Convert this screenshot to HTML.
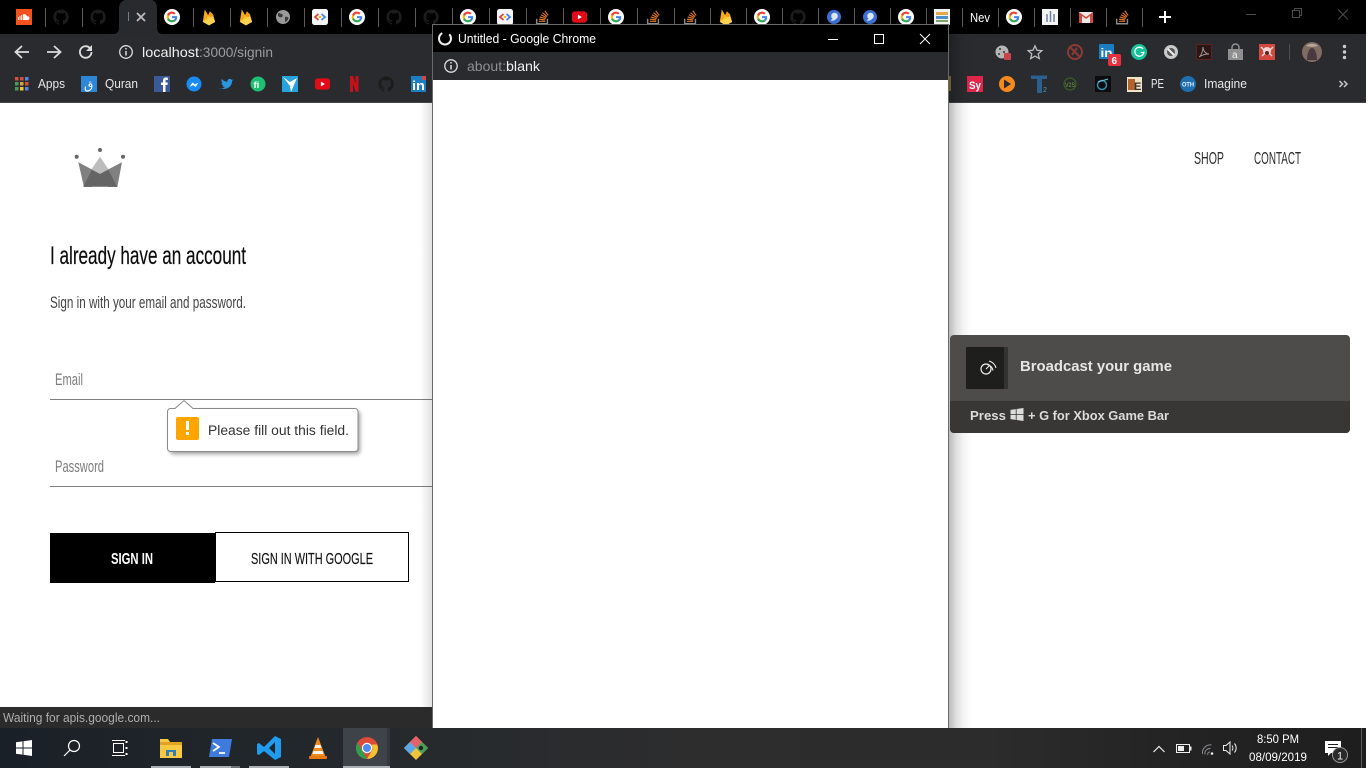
<!DOCTYPE html>
<html lang="en">
<head>
<meta charset="utf-8">
<title>Sign in</title>
<style>
html,body{margin:0;padding:0;background:#fff;width:1372px;height:768px;overflow:hidden}
svg{display:block}
text{font-family:"Liberation Sans",sans-serif;white-space:pre}
</style>
</head>
<body>
<svg width="1372" height="768" viewBox="0 0 1372 768" xmlns="http://www.w3.org/2000/svg">
<defs>
  <linearGradient id="shR" x1="0" x2="1" y1="0" y2="0">
    <stop offset="0" stop-color="#000" stop-opacity=".27"/>
    <stop offset=".3" stop-color="#000" stop-opacity=".13"/>
    <stop offset=".65" stop-color="#000" stop-opacity=".04"/>
    <stop offset="1" stop-color="#000" stop-opacity="0"/>
  </linearGradient>
  <linearGradient id="shL" x1="0" x2="1" y1="0" y2="0">
    <stop offset="0" stop-color="#000" stop-opacity="0"/>
    <stop offset="1" stop-color="#000" stop-opacity=".12"/>
  </linearGradient>
  <linearGradient id="tb" x1="0" x2="1" y1="0" y2="0">
    <stop offset="0" stop-color="#1a2027"/>
    <stop offset=".31" stop-color="#262a2d"/>
    <stop offset=".5" stop-color="#2d2d2e"/>
    <stop offset=".72" stop-color="#2c2c2c"/>
    <stop offset=".85" stop-color="#242424"/>
    <stop offset="1" stop-color="#1e1e1e"/>
  </linearGradient>
  <filter id="bub" x="-10%" y="-20%" width="125%" height="150%">
    <feGaussianBlur stdDeviation="2"/>
  </filter>
  <symbol id="g" viewBox="0 0 24 24" overflow="visible">
    <circle cx="12" cy="12" r="12" fill="#fff"/>
    <path d="M19.800 12.200c0-.6-.05-1.100-.15-1.600H12v3h4.400c-.2 1-.8 1.900-1.700 2.500v2h2.700c1.600-1.400 2.400-3.500 2.400-5.900z" fill="#4285f4"/>
    <path d="M12 20c2.200 0 4-.7 5.400-2l-2.700-2c-.7.5-1.600.8-2.700.8-2.100 0-3.900-1.400-4.500-3.300H4.700v2.100C6.100 18.300 8.800 20 12 20z" fill="#34a853"/>
    <path d="M7.500 13.500c-.3-1-.3-2 0-3V8.400H4.700c-.9 1.900-.9 5.300 0 7.200z" fill="#fbbc05"/>
    <path d="M12 7.200c1.200 0 2.200.4 3 1.200l2.300-2.300C15.900 4.800 14.100 4 12 4 8.800 4 6.100 5.700 4.700 8.400l2.800 2.100c.6-1.900 2.400-3.300 4.500-3.300z" fill="#ea4335"/>
  </symbol>
  <symbol id="gh" viewBox="0 0 16 16" overflow="visible">
    <path d="M8 .5a7.700 7.700 0 0 0-2.400 15c.4.1.5-.2.500-.4v-1.300c-2.100.5-2.600-1-2.600-1-.3-.9-.8-1.100-.8-1.100-.7-.5.100-.5.100-.5.800.1 1.200.8 1.200.8.700 1.200 1.800.8 2.200.6.100-.5.300-.8.500-1-1.700-.2-3.500-.9-3.500-3.800 0-.8.300-1.500.8-2-.1-.2-.3-1 .1-2 0 0 .6-.2 2.100.8a7.300 7.300 0 0 1 3.800 0c1.500-1 2.100-.8 2.100-.8.400 1 .2 1.800.1 2 .5.500.8 1.200.8 2 0 2.900-1.800 3.600-3.500 3.800.3.200.5.700.5 1.400v2.100c0 .2.100.5.500.4A7.700 7.700 0 0 0 8 .5z" fill="#1c1c1c"/>
  </symbol>
  <symbol id="fb" viewBox="0 0 16 20" overflow="visible">
    <path d="M1 15.500 3.200 1.500 7 8 9 3.500 12.500 7 15 15.500 8 19.500z" fill="#fbc02d"/>
    <path d="M3.200 1.500 7 8 5 12 1 15.500z" fill="#f6a81c"/>
    <path d="M9 3.500 12.500 7 15 15.500 7 8z" fill="#f59a1b"/>
    <path d="M1 15.500 12 9 15 15.500 8 19.500z" fill="#fdd24e"/>
  </symbol>
  <symbol id="so" viewBox="0 0 16 20" overflow="visible">
    <path d="M1.500 12v5.500h12V12" fill="none" stroke="#8a8a8a" stroke-width="1.600"/>
    <path d="M4 14.800h7M4.200 12.500l6.800.7M4.900 10l6.600 1.700M6.200 7.500l6 3M8 5.200l5.200 4.300M10.500 3l3.800 5.300" fill="none" stroke="#d9722a" stroke-width="1.300"/>
  </symbol>
  <symbol id="code" viewBox="0 0 16 16" overflow="visible">
    <rect width="16" height="16" rx="2.500" fill="#f5f5f5"/>
    <path d="M6.500 5 3 8l3.500 3" fill="none" stroke="#db4437" stroke-width="1.800"/>
    <path d="M9.500 5 13 8l-3.500 3" fill="none" stroke="#4285f4" stroke-width="1.800"/>
    <path d="M6.800 8h2.400" stroke="#f4b400" stroke-width="1.800"/>
  </symbol>
  <symbol id="yt" viewBox="0 0 16 12" overflow="visible">
    <rect width="16" height="12" rx="3" fill="#e30b17"/>
    <path d="M6.300 3.500v5L10.500 6z" fill="#fff"/>
  </symbol>
  <symbol id="blue" viewBox="0 0 14 14" overflow="visible">
    <circle cx="7" cy="7" r="7" fill="#3b6fd1"/>
    <circle cx="7.500" cy="6" r="3.300" fill="#dbe6fb"/>
    <path d="M3.500 10.500c1.500.5 4 .2 5.500-1.500l-3-.5z" fill="#dbe6fb"/>
  </symbol>
  <symbol id="win" viewBox="0 0 16 16" overflow="visible">
    <path d="M0 2.300 6.500 1.400V7.500H0zM7.500 1.200 16 0V7.500H7.500zM0 8.500H6.500V14.600L0 13.700zM7.500 8.500H16V16L7.500 14.800z" fill="currentColor"/>
  </symbol>
</defs>

<rect width="1372" height="768" fill="#fff"/>

<!-- Tab strip -->
<rect x="0" y="0" width="1366" height="34" fill="#000"/>
<path d="M113 34c4 0 6-2 6-7V8c0-4 3-8 7-8h25c4 0 6 4 6 8v19c0 5 2 7 6 7z" fill="#292a2d"/>
<g stroke="#5a5a5a" stroke-width="1">
  <path d="M45.500 8v19M82.500 8v19M193.500 8v19M230.500 8v19M267.500 8v19M304.500 8v19M341.500 8v19M378.500 8v19M415.500 8v19M452.500 8v19M489.500 8v19M526.500 8v16M563.500 8v16M600.500 8v16M637.500 8v16M674.500 8v16M710.500 8v16M746.500 8v16M782.500 8v16M818.500 8v16M854.500 8v16M890.500 8v16M926.500 8v16M962.500 8v19M998.500 8v19M1034.500 8v19M1070.500 8v19M1106.500 8v19M1142.500 8v19"/>
</g>
<!-- soundcloud -->
<rect x="16" y="9" width="16" height="16" fill="#f4511e"/>
<path d="M18 20v-3h.8v3zM19.600 20v-4h.8v4zM21.200 20v-5h.8v5zM22.800 20v-5.500c1.800-.9 3.700 0 4 1.800 1.500-.3 2.700.4 2.700 1.900 0 1.100-.8 1.800-1.900 1.800z" fill="#fff"/>
<use href="#gh" x="53" y="9" width="16" height="16"/>
<use href="#gh" x="90" y="9" width="16" height="16"/>
<path d="M128.500 12v9" stroke="#7c7c90" stroke-width="1"/>
<path d="M137 13l8 8M145 13l-8 8" stroke="#bdbdbd" stroke-width="1.800"/>
<use href="#g" x="164" y="9" width="16" height="16"/>
<use href="#fb" x="202" y="8" width="14" height="18"/>
<use href="#fb" x="239" y="8" width="14" height="18"/>
<circle cx="283" cy="17" r="7" fill="#9a9a9a"/>
<path d="M278 13c2 0 3 1 4 1s1 2 0 3-3 0-4-1zM285 17c2-.5 3 0 3.500 1-.5 2-2 3.500-3.500 4z" fill="#3a3a3a"/>
<use href="#code" x="312" y="9" width="16" height="16"/>
<use href="#g" x="349" y="9" width="16" height="16"/>
<use href="#gh" x="386" y="9" width="16" height="16"/>
<use href="#gh" x="423" y="9" width="16" height="16"/>
<use href="#g" x="460" y="9" width="16" height="16"/>
<use href="#code" x="497" y="9" width="16" height="16"/>
<use href="#so" x="535" y="8" width="15" height="18"/>
<use href="#yt" x="572" y="11" width="15" height="12"/>
<use href="#g" x="608" y="9" width="16" height="16"/>
<use href="#so" x="646" y="8" width="15" height="18"/>
<use href="#so" x="683" y="8" width="15" height="18"/>
<use href="#fb" x="719" y="8" width="14" height="18"/>
<use href="#g" x="754" y="9" width="16" height="16"/>
<use href="#gh" x="790" y="9" width="16" height="16"/>
<use href="#blue" x="827" y="10" width="14" height="14"/>
<use href="#blue" x="863" y="10" width="14" height="14"/>
<use href="#g" x="898" y="9" width="16" height="16"/>
<rect x="934" y="9" width="16" height="16" fill="#f2f2ee"/>
<rect x="936" y="12" width="12" height="3" fill="#e0a850"/>
<rect x="936" y="16" width="12" height="3" fill="#4b8fc4"/>
<rect x="936" y="20" width="12" height="2" fill="#7aa66a"/>
<text x="970" y="22" font-size="13" fill="#fff" textLength="20" lengthAdjust="spacingAndGlyphs">Nev</text>
<use href="#g" x="1006" y="9" width="16" height="16"/>
<rect x="1042" y="9" width="16" height="16" fill="#f5f5f5"/>
<path d="M1047 14v8M1050.500 11v11M1054 14v8" stroke="#6e7fa8" stroke-width="1.500"/>
<rect x="1079" y="12" width="14" height="11" fill="#f1e9e7"/>
<path d="M1079 12v11h3v-7l4 3 4-3v7h3V12l-7 5z" fill="#d14b3d"/>
<use href="#so" x="1115" y="8" width="15" height="18"/>
<path d="M1159 17h12M1165 11v12" stroke="#fff" stroke-width="2"/>
<!-- window controls -->
<path d="M1246 14.500h10" stroke="#4c4c4c" stroke-width="1"/>
<path d="M1292.500 10.500h7v7h-7zM1294.500 10.500v-2h7v7h-2" fill="none" stroke="#4c4c4c"/>
<path d="M1338 9.500l10 10M1348 9.500l-10 10" stroke="#4c4c4c"/>

<!-- Toolbar and bookmarks -->
<rect x="0" y="34" width="1366" height="68" fill="#2a2b2e"/>
<rect x="0" y="102" width="1366" height="1" fill="#444"/>
<path d="M29 52H16M22 46l-6.500 6 6.500 6" fill="none" stroke="#dcdcdc" stroke-width="1.800"/>
<path d="M47 52h13M54 46l6.500 6-6.500 6" fill="none" stroke="#dcdcdc" stroke-width="1.800"/>
<path d="M91.500 52a5.800 5.800 0 1 1-1.700-4.100" fill="none" stroke="#dcdcdc" stroke-width="1.800"/>
<path d="M92 45v6h-6z" fill="#dcdcdc"/>
<circle cx="126" cy="52" r="6.300" fill="none" stroke="#dcdcdc" stroke-width="1.300"/>
<path d="M126 51v4.500M126 48v1.500" stroke="#dcdcdc" stroke-width="1.500"/>
<text x="142" y="57" font-size="14" fill="#f0f0f0" textLength="57" lengthAdjust="spacingAndGlyphs">localhost</text>
<text x="199" y="57" font-size="14" fill="#9b9c9e" textLength="74" lengthAdjust="spacingAndGlyphs">:3000/signin</text>

<!-- right toolbar icons -->
<circle cx="1002" cy="52" r="6.500" fill="#b5b5b5"/>
<circle cx="1000" cy="49" r="1" fill="#333"/><circle cx="999" cy="54" r="1" fill="#333"/><circle cx="1004" cy="52" r="1" fill="#333"/>
<rect x="1004" y="53" width="7" height="7" rx="1" fill="#c9444a"/>
<path d="M1035 45.800l2 4.500 4.800.4-3.600 3.200 1.100 4.700-4.300-2.500-4.300 2.500 1.100-4.700-3.600-3.200 4.800-.4z" fill="none" stroke="#bdbdbd" stroke-width="1.300"/>
<circle cx="1075" cy="52" r="7" fill="none" stroke="#8c3a34" stroke-width="2"/>
<path d="M1070 47l10 10M1072 55l5-7" stroke="#8c3a34" stroke-width="2"/>
<rect x="1099" y="44" width="15" height="15" rx="1" fill="#1c7ec2"/>
<text x="1100.500" y="57" font-size="12" font-weight="700" fill="#fff" textLength="12" lengthAdjust="spacingAndGlyphs">in</text>
<rect x="1108" y="54" width="13" height="12" rx="2" fill="#e8303f"/>
<text x="1111.500" y="64" font-size="10" font-weight="700" fill="#fff">6</text>
<circle cx="1139" cy="52" r="8" fill="#15c39a"/>
<path d="M1143 49a4.500 4.500 0 1 0 .8 3.500h-3" fill="none" stroke="#fff" stroke-width="1.300"/>
<circle cx="1171" cy="52" r="7" fill="#c9c9c9"/>
<circle cx="1171" cy="52" r="4" fill="#555"/>
<path d="M1168 49l6 6" stroke="#eee" stroke-width="2"/>
<rect x="1196.500" y="44.500" width="15" height="15" fill="#2a1614" stroke="#5a2420"/>
<path d="M1199 57c2-1 4-6 4-10 0 4 3 7 6 7-3 0-7 1-10 3z" fill="none" stroke="#a39693"/>
<path d="M1228 49h15v11h-15z" fill="#8f8f8f"/>
<path d="M1232 49v-1.500a3.500 3.500 0 0 1 7 0V49" fill="none" stroke="#8f8f8f" stroke-width="1.500"/>
<text x="1232" y="58" font-size="10" fill="#eee">a</text>
<rect x="1259" y="44" width="16" height="16" fill="#d2493f"/>
<circle cx="1267" cy="51" r="4" fill="#f3d6d3"/>
<path d="M1261 47l3 3M1273 47l-3 3M1262 56l3-3M1272 56l-3-3" stroke="#f3d6d3" stroke-width="1.500"/>
<circle cx="1267" cy="53" r="2" fill="#5a2320"/>
<path d="M1289.500 44v16" stroke="#4c4d50"/>
<circle cx="1312" cy="52" r="10" fill="#7f6c62"/>
<path d="M1307 60c0-6 2-12 5-12s5 6 5 12z" fill="#4a3940"/>
<path d="M1306 46c3-3 9-3 12 0-3 1-9 1-12 0z" fill="#b5a89a"/>
<circle cx="1344.500" cy="46.500" r="1.700" fill="#ccc"/><circle cx="1344.500" cy="52" r="1.700" fill="#ccc"/><circle cx="1344.500" cy="57.500" r="1.700" fill="#ccc"/>

<!-- bookmarks -->
<g>
  <rect x="15" y="77" width="3.500" height="3.500" fill="#d5503c"/><rect x="20" y="77" width="3.500" height="3.500" fill="#d5503c"/><rect x="25" y="77" width="3.500" height="3.500" fill="#4c88e8"/>
  <rect x="15" y="82" width="3.500" height="3.500" fill="#4c9a5a"/><rect x="20" y="82" width="3.500" height="3.500" fill="#d5a53c"/><rect x="25" y="82" width="3.500" height="3.500" fill="#d5503c"/>
  <rect x="15" y="87" width="3.500" height="3.500" fill="#4c9a5a"/><rect x="20" y="87" width="3.500" height="3.500" fill="#f4c430"/><rect x="25" y="87" width="3.500" height="3.500" fill="#4c88e8"/>
</g>
<text x="38" y="88" font-size="12.500" fill="#e8e8e8" textLength="27" lengthAdjust="spacingAndGlyphs">Apps</text>
<rect x="81" y="76" width="16" height="16" fill="#2d86d6"/>
<text x="84" y="89" font-size="12" fill="#fff" font-family="'DejaVu Sans',sans-serif">ق</text>
<text x="105" y="88" font-size="12.500" fill="#e8e8e8" textLength="33" lengthAdjust="spacingAndGlyphs">Quran</text>
<rect x="154" y="76" width="16" height="16" fill="#3b5998"/>
<path d="M163 92v-7h-2v-2.500h2V80.500c0-2 1.200-3 3-3h1.800V80h-1.300c-.8 0-1 .4-1 1v1.500h2.300l-.4 2.500h-1.900v7z" fill="#fff"/>
<circle cx="194" cy="84" r="7.500" fill="#1a8af5"/>
<path d="M189.500 87l3-4.500 2.500 2 3.500-2-3 4.500-2.500-2z" fill="#fff"/>
<path d="M219 88c4 2 10 1 12-3 1-2 1-3 1-4l1.500-1.500-1.700.4c-1-1.700-4.300-1.500-4.600 1.800-2 0-4-1-5.500-2.700-.6 1.500-.3 3 1 4l-1.300-.3c0 1.500 1 2.500 2.500 3h-1.400c.4 1 1.300 1.600 2.500 1.700-1.600 1-3.500 1.300-6 1.100z" fill="#2a96e0"/>
<circle cx="258" cy="84" r="7.500" fill="#1dbf73"/>
<text x="253.500" y="88" font-size="9.500" font-weight="700" fill="#fff" font-family="'Liberation Serif',serif">fi</text>
<rect x="282" y="76" width="16" height="16" fill="#26a3dc"/>
<path d="M283 77l7 5 7-4-3 7-3 7-1-6z" fill="#fff"/>
<use href="#yt" x="315" y="78" width="15" height="12"/>
<path d="M350 76h3l2.500 8V76h3v16l-3-.5-2.500-8V92l-3 .3z" fill="#c4111a"/>
<use href="#gh" x="378" y="76" width="16" height="16"/>
<rect x="411" y="76" width="15" height="16" fill="#1c7ec2"/>
<text x="412" y="90" font-size="13" font-weight="700" fill="#fff" textLength="13" lengthAdjust="spacingAndGlyphs">in</text>
<rect x="422" y="76" width="4" height="4" fill="#d04848"/>

<rect x="948" y="76" width="3" height="15" fill="#8f7a3a"/>
<rect x="967" y="76" width="16" height="16" fill="#e0244a"/>
<text x="969" y="89" font-size="11" font-weight="700" fill="#fff" textLength="12" lengthAdjust="spacingAndGlyphs">Sy</text>
<circle cx="1007" cy="84" r="8" fill="#f58a1f"/>
<path d="M1004 79.500v9l7-4.500z" fill="#2a2b2e"/>
<path d="M1031 75.500h16v3.500h-5V93h-5V79h-6z" fill="#2a6090"/>
<text x="1043" y="92" font-size="7" fill="#5f95c0">2</text>
<circle cx="1070" cy="84" r="6" fill="none" stroke="#3f6a1f" stroke-width="1"/>
<text x="1065" y="87" font-size="6.500" fill="#6ea53a" textLength="10" lengthAdjust="spacingAndGlyphs">V2S</text>
<rect x="1095" y="76" width="16" height="16" fill="#0c0c0c"/>
<circle cx="1102" cy="85" r="4.500" fill="none" stroke="#2d8fb5" stroke-width="1.500"/>
<path d="M1098 82l10-3" stroke="#6fc2dd"/>
<rect x="1127" y="77" width="15" height="15" fill="#f1e3c8"/>
<rect x="1128" y="79" width="7" height="11" fill="#b5622c"/>
<text x="1134" y="90" font-size="11" font-weight="700" fill="#333">E</text>
<text x="1151" y="88" font-size="12.500" fill="#e8e8e8" textLength="13" lengthAdjust="spacingAndGlyphs">PE</text>
<circle cx="1188" cy="84" r="8" fill="#1f6fb0"/>
<text x="1182" y="86.500" font-size="6" font-weight="700" fill="#e8f2fa" textLength="12" lengthAdjust="spacingAndGlyphs">OTH</text>
<text x="1204" y="88" font-size="12.500" fill="#e8e8e8" textLength="43" lengthAdjust="spacingAndGlyphs">Imagine</text>
<path d="M1339.500 81l3 3-3 3M1344 81l3 3-3 3" fill="none" stroke="#c8c8c8" stroke-width="1.500"/>

<!-- Page -->
<circle cx="76.700" cy="156.700" r="2" fill="#666"/>
<circle cx="100" cy="150" r="2" fill="#666"/>
<circle cx="123" cy="156.700" r="2" fill="#666"/>
<path d="M100 156.700 90 171.500 100 175 110 171.500z" fill="#bcbcbc"/>
<path d="M78.300 162.300 92 169.500 100 174 92 187H84z" fill="#808080"/>
<path d="M122 162.300 108 169.500 100 174 108 187H117.300z" fill="#808080"/>
<path d="M100 174 91.700 170 83.300 186.700H117.300L108.300 170z" fill="#646464"/>
<text x="50" y="264" font-size="25" fill="#0c0c0c" stroke="#0c0c0c" stroke-width=".2" textLength="196" lengthAdjust="spacingAndGlyphs">I already have an account</text>
<text x="50" y="308" font-size="17" fill="#444" textLength="196" lengthAdjust="spacingAndGlyphs">Sign in with your email and password.</text>
<text x="55" y="385" font-size="17" fill="#7d7d7d" textLength="28" lengthAdjust="spacingAndGlyphs">Email</text>
<rect x="50" y="399" width="383" height="1" fill="#7f7f7f"/>
<text x="55" y="472" font-size="17" fill="#7d7d7d" textLength="49" lengthAdjust="spacingAndGlyphs">Password</text>
<rect x="50" y="486" width="383" height="1" fill="#7f7f7f"/>
<rect x="50" y="533" width="165" height="50" fill="#000"/>
<text x="111" y="564" font-size="16" font-weight="700" fill="#fff" textLength="42" lengthAdjust="spacingAndGlyphs">SIGN IN</text>
<rect x="215.500" y="532.500" width="193" height="49" fill="#fff" stroke="#000"/>
<text x="251" y="564" font-size="16" fill="#111" stroke="#111" stroke-width=".15" textLength="122" lengthAdjust="spacingAndGlyphs">SIGN IN WITH GOOGLE</text>
<text x="1194" y="164" font-size="17.500" fill="#2c2c2c" textLength="30" lengthAdjust="spacingAndGlyphs">SHOP</text>
<text x="1254" y="164" font-size="17.500" fill="#2c2c2c" textLength="47" lengthAdjust="spacingAndGlyphs">CONTACT</text>

<!-- Validation bubble -->
<rect x="170" y="411" width="190" height="43" rx="3" fill="#000" opacity=".4" filter="url(#bub)"/>
<path d="M170.500 408.500H175L184 400.500 193 408.500H355a3 3 0 0 1 3 3v37a3 3 0 0 1-3 3H170.500a3 3 0 0 1-3-3v-37a3 3 0 0 1 3-3z" fill="#fff" stroke="#8a8a8a"/>
<rect x="176" y="417" width="23" height="23" rx="2" fill="#ffa500"/>
<rect x="186" y="421" width="3" height="9" fill="#fff"/>
<rect x="186" y="432" width="3" height="3" fill="#fff"/>
<text x="208" y="435" font-size="13.500" fill="#333" textLength="141" lengthAdjust="spacingAndGlyphs">Please fill out this field.</text>

<!-- Status bar -->
<rect x="0" y="707" width="433" height="21" fill="#2b2b2b"/>
<text x="3" y="722" font-size="12.500" fill="#aeaeae" textLength="157" lengthAdjust="spacingAndGlyphs">Waiting for apis.google.com...</text>

<!-- Popup window shadow -->
<rect x="949" y="24" width="23" height="704" fill="url(#shR)"/>
<rect x="420" y="103" width="13" height="604" fill="url(#shL)"/>

<!-- Popup window -->
<rect x="432" y="24" width="517" height="704" fill="#6a6a6a"/>
<rect x="433" y="25" width="515" height="27" fill="#000"/>
<rect x="433" y="52" width="515" height="28" fill="#292b2e"/>
<rect x="433" y="80" width="515" height="648" fill="#fff"/>
<circle cx="445" cy="38.500" r="6" fill="none" stroke="#eee" stroke-width="2" stroke-dasharray="30 7.700" transform="rotate(-45 445 38.500)"/>
<text x="458" y="43" font-size="12.500" fill="#fff" textLength="138" lengthAdjust="spacingAndGlyphs">Untitled - Google Chrome</text>
<path d="M828 39.500h10" stroke="#fff"/>
<rect x="874.500" y="34.500" width="9" height="9" fill="none" stroke="#fff"/>
<path d="M920 34l10 10M930 34l-10 10" stroke="#fff"/>
<circle cx="451" cy="66" r="6.200" fill="none" stroke="#dedede" stroke-width="1.300"/>
<path d="M451 65v4.500M451 62v1.500" stroke="#dedede" stroke-width="1.500"/>
<text x="467" y="71" font-size="14" fill="#8e8f91" textLength="39" lengthAdjust="spacingAndGlyphs">about:</text>
<text x="506" y="71" font-size="14" fill="#f0f0f0" textLength="34" lengthAdjust="spacingAndGlyphs">blank</text>

<!-- Game bar toast -->
<rect x="950" y="335" width="400" height="98" rx="4" fill="#4d4c4a"/>
<path d="M950 401H1350V429a4 4 0 0 1-4 4H954a4 4 0 0 1-4-4z" fill="#383735"/>
<rect x="966" y="347" width="38" height="42" fill="#1e1e1d"/>
<rect x="1004" y="347" width="4" height="42" fill="#333"/>
<circle cx="986" cy="369" r="5" fill="none" stroke="#eee" stroke-width="1.200"/>
<path d="M987 364.500a7 7 0 0 1 6 6M989 361a10 10 0 0 1 7 7M986 369l3-3" fill="none" stroke="#eee" stroke-width="1.100"/>
<text x="1020" y="371" font-size="14.500" font-weight="700" fill="#e6e6e6" textLength="152" lengthAdjust="spacingAndGlyphs">Broadcast your game</text>
<text x="970" y="420" font-size="13" font-weight="700" fill="#dcdcdc" textLength="36" lengthAdjust="spacingAndGlyphs">Press</text>
<use href="#win" x="1010" y="408" width="14" height="13" color="#dcdcdc"/>
<text x="1028" y="420" font-size="13" font-weight="700" fill="#dcdcdc" textLength="141" lengthAdjust="spacingAndGlyphs">+ G for Xbox Game Bar</text>

<!-- Taskbar -->
<rect x="0" y="728" width="1366" height="40" fill="url(#tb)"/>
<rect x="343" y="728" width="44" height="40" fill="#3e4349"/>
<rect x="387" y="728" width="3" height="40" fill="#34383d"/>
<use href="#win" x="16" y="740" width="16" height="16" color="#fff"/>
<circle cx="74" cy="746" r="5.500" fill="none" stroke="#fff" stroke-width="1.200"/>
<path d="M70 750l-6 6" stroke="#fff" stroke-width="1.200"/>
<path d="M113.500 743.500h10v9h-10zM112 740.500h13M112 755.500h13" fill="none" stroke="#fff"/>
<rect x="125.500" y="741" width="2" height="2" fill="#fff"/><rect x="125.500" y="747" width="2" height="2" fill="#fff"/><rect x="125.500" y="753" width="2" height="2" fill="#fff"/>
<path d="M160 739h8l2 3h12v16h-22z" fill="#f9c943"/>
<rect x="160" y="742" width="22" height="3" fill="#e0a320"/>
<rect x="166" y="750" width="10" height="6" fill="#2f7fb8"/>
<rect x="169" y="752" width="4" height="6" fill="#f9c943"/>
<path d="M212 739h20l-3 18h-20z" fill="#3f7bdc"/>
<path d="M213 743l6 4-6 4" fill="none" stroke="#fff" stroke-width="1.700"/>
<path d="M219 753h6" stroke="#fff" stroke-width="1.700"/>
<path d="M275 736l6 3v18l-6 3-11-9-5 4-2-1v-10l2-1 5 4zM275 742l-6 6 6 6z" fill="#1f9cf0" fill-rule="evenodd"/>
<path d="M318 737l8 21h-16z" fill="#f08a1a"/>
<path d="M315.500 745h5l1 3h-7zM313.500 751h9l1 3h-11z" fill="#f4f4f4"/>
<rect x="309" y="756" width="18" height="3" rx="1" fill="#e87a10"/>
<circle cx="367" cy="748" r="11" fill="#dd4b39"/>
<path d="M367 759a11 11 0 0 1-9.500-16.500L363 752z" fill="#2ea04f"/>
<path d="M378 748a11 11 0 0 1-11 11l5.500-9.500-1-5h5.500a11 11 0 0 1 1 3.500z" fill="#f6c12e"/>
<circle cx="367" cy="748" r="5.200" fill="#fff"/>
<circle cx="367" cy="748" r="4" fill="#4f8bf1"/>
<path d="M416 736l12 12-12 12-12-12z" fill="#f0c33c"/>
<path d="M404 748l6-6 6 6-6 6z" fill="#5aa7ea"/>
<path d="M410 742l6-6 6 6-6 6z" fill="#e4606d"/>
<path d="M416 748l6-6 6 6-6 6z" fill="#46a05a"/>
<circle cx="421" cy="748" r="2.200" fill="#222"/>
<rect x="151" y="766" width="40" height="2" fill="#aab0b5"/>
<rect x="200" y="766" width="31" height="2" fill="#aab0b5"/>
<rect x="231" y="766" width="9" height="2" fill="#6e7378"/>
<rect x="249" y="766" width="40" height="2" fill="#aab0b5"/>
<rect x="343" y="766" width="47" height="2" fill="#aab0b5"/>
<!-- tray -->
<path d="M1153.500 752l5.500-5.500 5.500 5.500" fill="none" stroke="#eee" stroke-width="1.200"/>
<rect x="1176.500" y="744.500" width="13" height="8" fill="none" stroke="#eee"/>
<rect x="1178" y="746" width="6" height="5" fill="#eee"/>
<rect x="1190" y="746.500" width="1.500" height="4" fill="#eee"/>
<path d="M1202.500 754a8 8 0 0 1 9-9M1205 754.500a5 5 0 0 1 5.500-6M1208 755a2 2 0 0 1 2-3" fill="none" stroke="#8a8d90" stroke-width="1"/>
<circle cx="1212" cy="753.500" r="1.300" fill="#eee"/>
<path d="M1223.500 745.500h2.500l4-3.500v12l-4-3.500h-2.500z" fill="none" stroke="#eee"/>
<path d="M1232 745.500a4 4 0 0 1 0 5M1234.500 743.500a7 7 0 0 1 0 9" fill="none" stroke="#eee"/>
<text x="1257" y="743" font-size="12" fill="#fff" textLength="42" lengthAdjust="spacingAndGlyphs">8:50 PM</text>
<text x="1249" y="761" font-size="12" fill="#fff" textLength="58" lengthAdjust="spacingAndGlyphs">08/09/2019</text>
<path d="M1325 741h16v12h-10l-3 3v-3h-3z" fill="#fff"/>
<path d="M1328 744.500h10M1328 747.500h10" stroke="#1e1e1e"/>
<circle cx="1340" cy="755" r="7.500" fill="#2a2a2a" stroke="#9a9a9a"/>
<text x="1337" y="759.500" font-size="11" fill="#eee">1</text>
<rect x="1361" y="728" width="1" height="40" fill="#5a5a5a"/>
</svg>
</body>
</html>
